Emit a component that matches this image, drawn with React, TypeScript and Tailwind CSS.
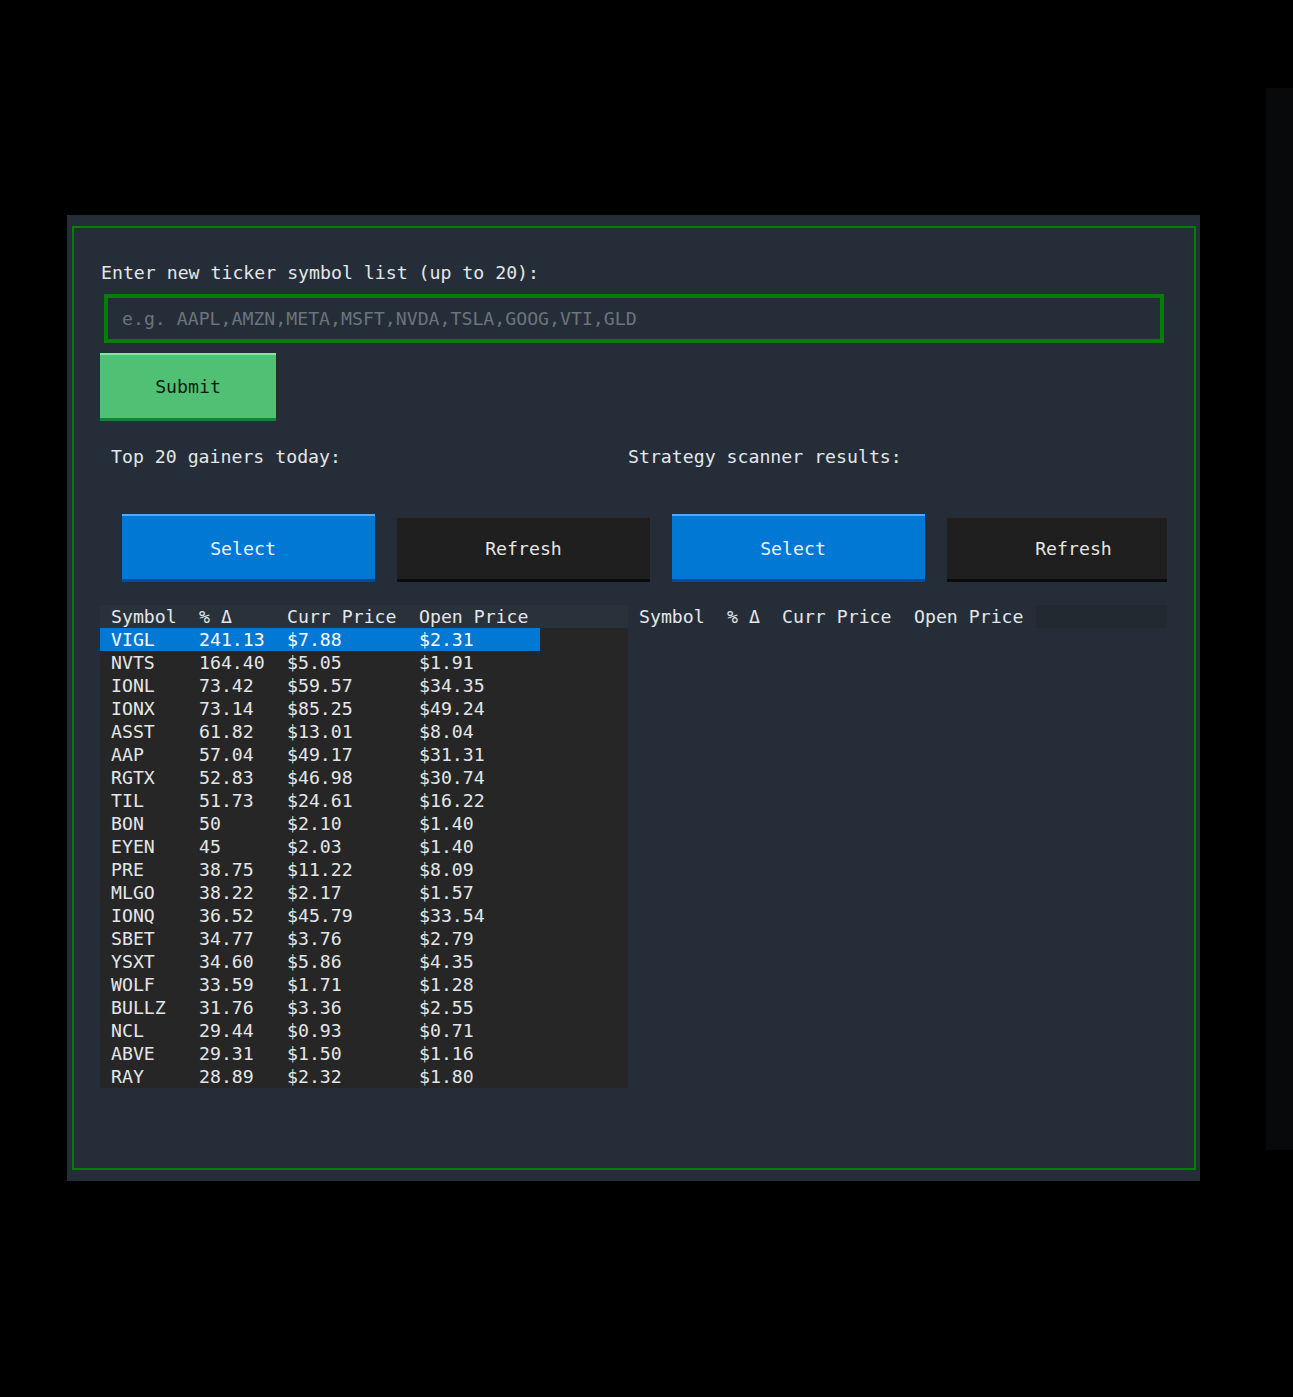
type Gainer = {
  symbol: string;
  change: string;
  curr: string;
  open: string;
};

const gainers: Gainer[] = [
  { symbol: "VIGL", change: "241.13", curr: "$7.88", open: "$2.31" },
  { symbol: "NVTS", change: "164.40", curr: "$5.05", open: "$1.91" },
  { symbol: "IONL", change: "73.42", curr: "$59.57", open: "$34.35" },
  { symbol: "IONX", change: "73.14", curr: "$85.25", open: "$49.24" },
  { symbol: "ASST", change: "61.82", curr: "$13.01", open: "$8.04" },
  { symbol: "AAP", change: "57.04", curr: "$49.17", open: "$31.31" },
  { symbol: "RGTX", change: "52.83", curr: "$46.98", open: "$30.74" },
  { symbol: "TIL", change: "51.73", curr: "$24.61", open: "$16.22" },
  { symbol: "BON", change: "50", curr: "$2.10", open: "$1.40" },
  { symbol: "EYEN", change: "45", curr: "$2.03", open: "$1.40" },
  { symbol: "PRE", change: "38.75", curr: "$11.22", open: "$8.09" },
  { symbol: "MLGO", change: "38.22", curr: "$2.17", open: "$1.57" },
  { symbol: "IONQ", change: "36.52", curr: "$45.79", open: "$33.54" },
  { symbol: "SBET", change: "34.77", curr: "$3.76", open: "$2.79" },
  { symbol: "YSXT", change: "34.60", curr: "$5.86", open: "$4.35" },
  { symbol: "WOLF", change: "33.59", curr: "$1.71", open: "$1.28" },
  { symbol: "BULLZ", change: "31.76", curr: "$3.36", open: "$2.55" },
  { symbol: "NCL", change: "29.44", curr: "$0.93", open: "$0.71" },
  { symbol: "ABVE", change: "29.31", curr: "$1.50", open: "$1.16" },
  { symbol: "RAY", change: "28.89", curr: "$2.32", open: "$1.80" },
];

function SelectButton() {
  return (
    <button className="w-[253px] h-[68px] shrink-0 bg-[#0078d4] border-t-2 border-b-[3px] border-t-[#5aa8f2] border-b-[#004b9a] pr-[11px] pt-[1px] text-[#eef4fb]">
      Select
    </button>
  );
}

function RefreshButton() {
  return (
    <button className="w-[253px] h-[66px] mt-[2px] shrink-0 bg-[#1f1f1f] border-t-2 border-b-[3px] border-t-[#2b2b2b] border-b-[#0c0c0c] text-[#e6e6e6]">
      Refresh
    </button>
  );
}

export default function App() {
  return (
    <div
      className="min-h-[1397px] w-full bg-black flex items-start text-[18.2px] leading-[23px] text-[#e4e6e8]"
      style={{ fontFamily: '"DejaVu Sans Mono", "Liberation Mono", monospace' }}
    >
      <div className="ml-[67px] mt-[215px] w-[1133px] h-[966px] bg-[#252e38] pl-[5px] pt-[11px]">
        <div className="w-[1124px] h-[944px] border-2 border-[#008000]">
          <div className="mt-[33px] ml-[27px]">
            Enter new ticker symbol list (up to 20):
          </div>

          <div className="mt-[10px] ml-[30px] w-[1060px] h-[49px] border-4 border-[#008000] flex items-center pl-[14px] text-[#6c747d]">
            e.g. AAPL,AMZN,META,MSFT,NVDA,TSLA,GOOG,VTI,GLD
          </div>

          <button className="mt-[10px] ml-[26px] w-[176px] h-[68px] bg-[#50c174] border-t-2 border-b-[3px] border-t-[#80e79c] border-b-[#118436] text-[#0f1a12] block">
            Submit
          </button>

          <div className="mt-[24px] flex">
            <div className="ml-[37px] w-[517px]">Top 20 gainers today:</div>
            <div>Strategy scanner results:</div>
          </div>

          <div className="mt-[46px] ml-[48px] flex items-start">
            <SelectButton />
            <div className="ml-[22px]">
              <RefreshButton />
            </div>
            <div className="ml-[22px]">
              <SelectButton />
            </div>
            <div className="ml-[22px] w-[220px] overflow-hidden flex">
              <RefreshButton />
            </div>
          </div>

          <div className="mt-[23px] ml-[26px] flex items-start">
            <div className="w-[528px] bg-[#262626]">
              <div className="flex bg-[#29313a]">
                <div className="w-[88px] pl-[11px]">Symbol</div>
                <div className="w-[88px] pl-[11px]">% Δ</div>
                <div className="w-[132px] pl-[11px]">Curr Price</div>
                <div className="w-[132px] pl-[11px]">Open Price</div>
              </div>
              {gainers.map((g, i) => (
                <div
                  key={g.symbol}
                  className={`flex w-[440px] ${i === 0 ? "bg-[#0078d4] text-white" : ""}`}
                >
                  <div className="w-[88px] pl-[11px]">{g.symbol}</div>
                  <div className="w-[88px] pl-[11px]">{g.change}</div>
                  <div className="w-[132px] pl-[11px]">{g.curr}</div>
                  <div className="w-[132px] pl-[11px]">{g.open}</div>
                </div>
              ))}
            </div>

            <div className="w-[539px] overflow-hidden">
              <div className="flex">
                <div className="w-[88px] pl-[11px] shrink-0">Symbol</div>
                <div className="w-[55px] pl-[11px] shrink-0">% Δ</div>
                <div className="w-[132px] pl-[11px] shrink-0">Curr Price</div>
                <div className="w-[133px] pl-[11px] shrink-0">Open Price</div>
                <div className="w-[160px] shrink-0 bg-[#222930]" />
              </div>
            </div>
          </div>
        </div>
      </div>

      <div className="ml-auto mt-[88px] w-[27px] h-[1062px] bg-[#08090a]" />
    </div>
  );
}
